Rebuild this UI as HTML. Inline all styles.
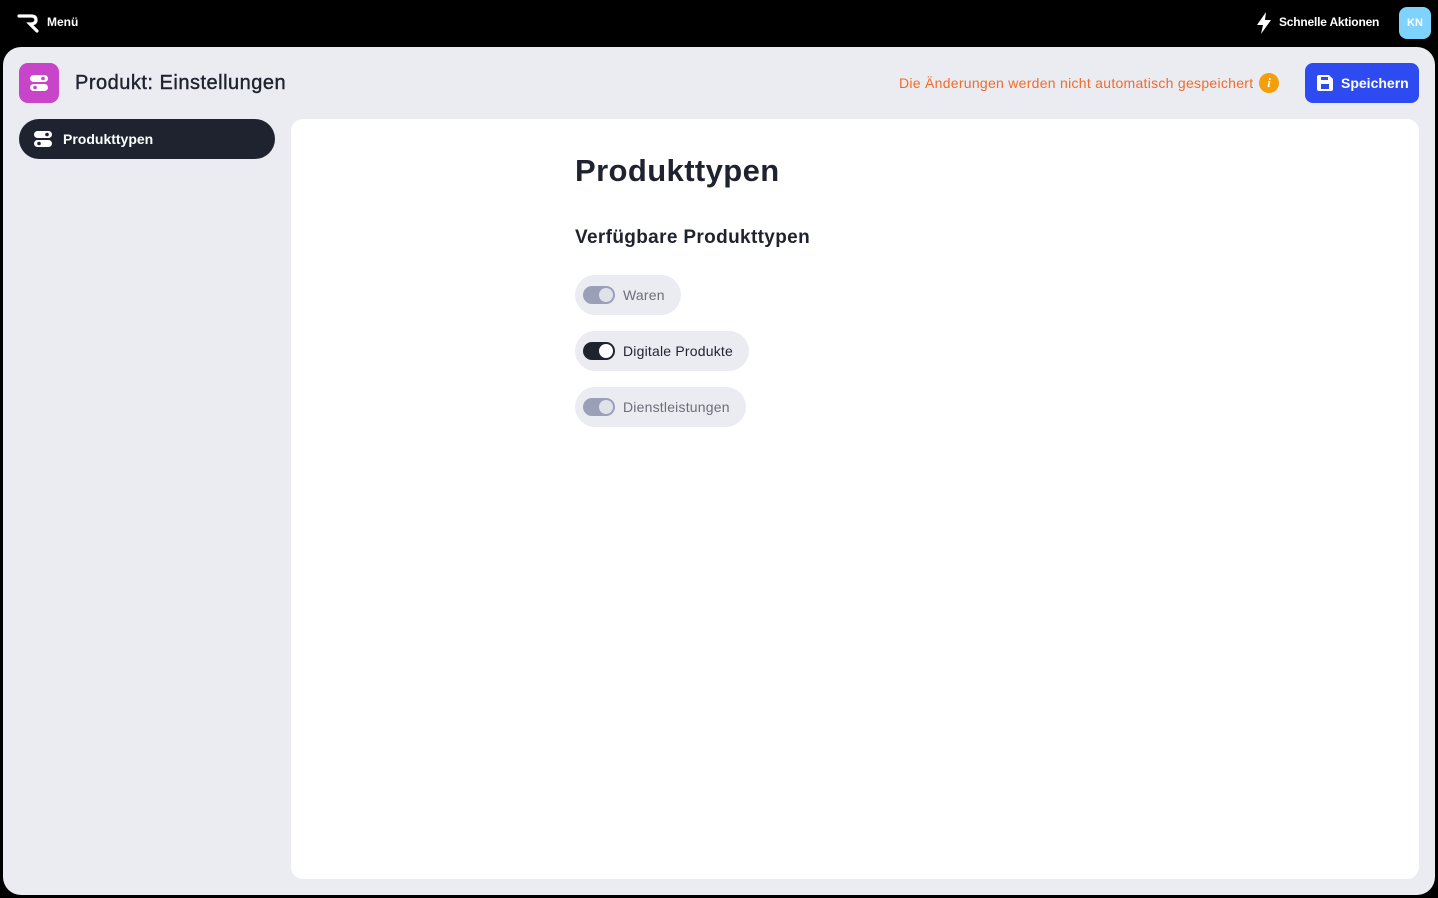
<!DOCTYPE html>
<html><head><meta charset="utf-8"><style>
*{box-sizing:border-box;margin:0;padding:0}
body{width:1438px;height:898px;background:#000;font-family:"Liberation Sans",sans-serif;position:relative;overflow:hidden}
.top{position:absolute;left:0;top:0;width:1438px;height:46px;color:#fff}
.main{position:absolute;left:3px;top:47px;width:1432px;height:848px;background:#ebecf1;border-radius:18px}
.card{position:absolute;left:291px;top:119px;width:1128px;height:760px;background:#fff;border-radius:12px}
.pill{position:absolute;left:575px;height:40px;border-radius:20px;background:#ebecf1;display:flex;align-items:center;padding:0 16px 0 8px;font-size:14px;color:#6b6f7a;letter-spacing:0.2px}
.sw{width:32px;height:18px;border-radius:9px;background:#9aa0b8;position:relative;margin-right:8px}
.sw::after{content:"";position:absolute;right:2px;top:2px;width:14px;height:14px;border-radius:50%;background:#e0e2ea}
.sw.on{background:#1f2330}.sw.on::after{background:#fff}
</style></head><body>
<div class="top">
<svg style="position:absolute;left:17px;top:13px" width="22" height="20" viewBox="0 0 22 20"><path d="M2 3 H14 Q19 3 19 7 Q19 11 13 11 L20 18" stroke="#fff" stroke-width="3.2" fill="none" stroke-linecap="round"/></svg>
<div style="position:absolute;left:47px;top:15px;font-size:12px;font-weight:bold">Menü</div>
<svg style="position:absolute;left:1255px;top:12px" width="18" height="22" viewBox="0 0 18 22"><path d="M11 0 L2 13 H8 L6 22 L16 8 H10 Z" fill="#fff"/></svg>
<div style="position:absolute;left:1279px;top:15px;font-size:12px;font-weight:bold;letter-spacing:-0.2px">Schnelle Aktionen</div>
<div style="position:absolute;left:1399px;top:7px;width:32px;height:32px;border-radius:8px;background:#7dd3fc;font-size:11px;font-weight:bold;display:flex;align-items:center;justify-content:center">KN</div>
</div>
<div class="main"></div>
<div style="position:absolute;left:19px;top:63px;width:40px;height:40px;border-radius:9px;background:#c844c8"></div>
<svg style="position:absolute;left:29px;top:73px" width="20" height="20" viewBox="0 0 20 20"><rect x="1" y="2" width="18" height="7" rx="3.5" fill="#fff"/><rect x="1" y="11" width="18" height="7" rx="3.5" fill="#fff"/><circle cx="14" cy="5.5" r="1.8" fill="#c844c8"/><circle cx="6" cy="14.5" r="1.8" fill="#c844c8"/></svg>
<div style="position:absolute;left:75px;top:72px;font-size:20px;color:#1f2330;letter-spacing:0.5px;-webkit-text-stroke:0.4px #1f2330">Produkt: Einstellungen</div>
<div style="position:absolute;left:899px;top:75px;font-size:14px;color:#f26b2a;letter-spacing:0.28px">Die Änderungen werden nicht automatisch gespeichert</div>
<div style="position:absolute;left:1259px;top:73px;width:20px;height:20px;border-radius:50%;background:#f59e0b;color:#fff;font-size:13px;font-weight:bold;font-style:italic;text-align:center;line-height:20px;font-family:'Liberation Serif',serif">i</div>
<div style="position:absolute;left:1305px;top:63px;width:114px;height:40px;border-radius:8px;background:#2d4bf0;color:#fff;font-size:14px;font-weight:bold;display:flex;align-items:center;padding-left:10px">
<svg width="20" height="20" viewBox="0 0 20 20" style="margin-right:6px"><path d="M2 4 Q2 2 4 2 H14 L18 6 V16 Q18 18 16 18 H4 Q2 18 2 16 Z" fill="#fff"/><rect x="6" y="4" width="7" height="3" fill="#2d4bf0"/><rect x="6" y="11" width="8" height="5" fill="#2d4bf0"/></svg>Speichern</div>
<div style="position:absolute;left:19px;top:119px;width:256px;height:40px;border-radius:20px;background:#1f2330;color:#fff;font-size:14px;font-weight:bold;display:flex;align-items:center;padding-left:14px">
<svg width="20" height="20" viewBox="0 0 20 20" style="margin-right:10px"><rect x="1" y="2" width="18" height="7" rx="3.5" fill="#fff"/><rect x="1" y="11" width="18" height="7" rx="3.5" fill="#fff"/><circle cx="14" cy="5.5" r="1.8" fill="#1f2330"/><circle cx="6" cy="14.5" r="1.8" fill="#1f2330"/></svg>Produkttypen</div>
<div class="card"></div>
<div style="position:absolute;left:575px;top:153px;font-size:31px;font-weight:bold;color:#1f2330;letter-spacing:0.4px">Produkttypen</div>
<div style="position:absolute;left:575px;top:227px;font-size:19px;font-weight:bold;color:#1f2330;letter-spacing:0.35px">Verfügbare Produkttypen</div>
<div class="pill" style="top:275px"><div class="sw"></div>Waren</div>
<div class="pill" style="top:331px;color:#1f2330"><div class="sw on"></div>Digitale Produkte</div>
<div class="pill" style="top:387px"><div class="sw"></div>Dienstleistungen</div>
</body></html>
